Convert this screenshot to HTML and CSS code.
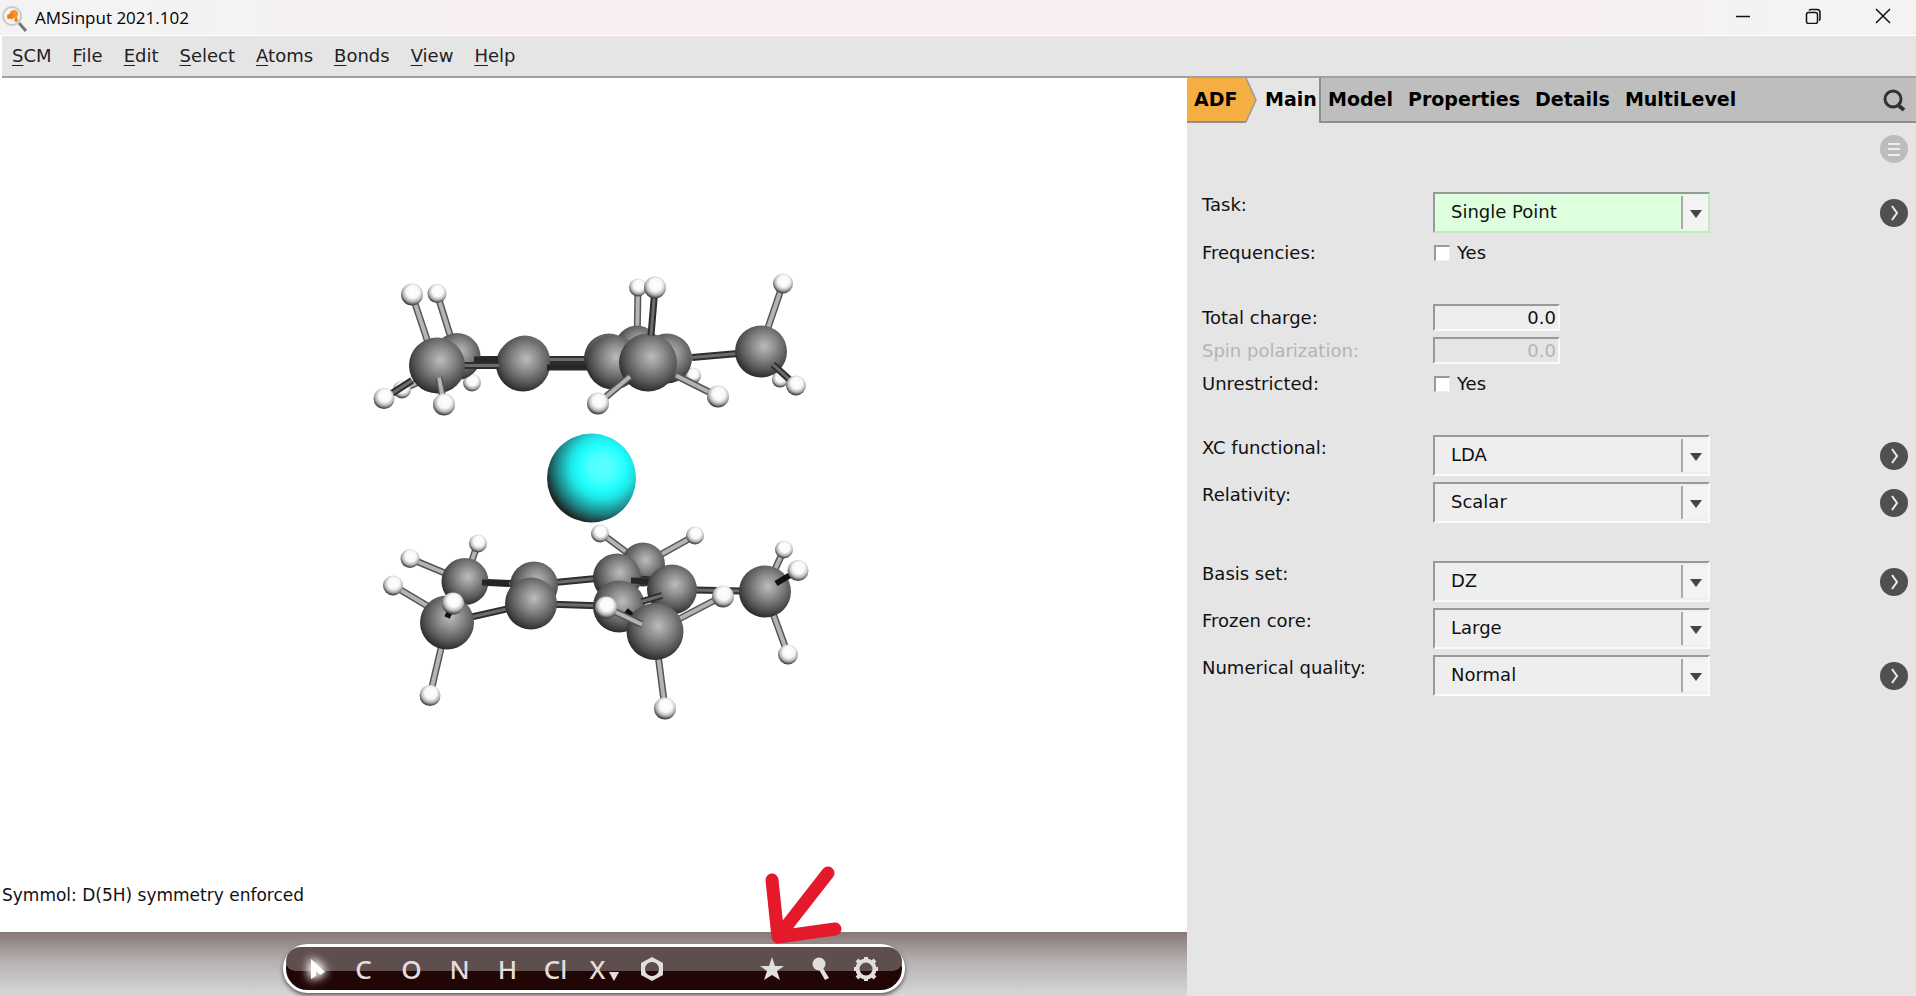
FILE: index.html
```html
<!DOCTYPE html>
<html lang="en">
<head>
<meta charset="utf-8">
<title>AMSinput 2021.102</title>
<link rel="stylesheet" href="styles.css">
</head>
<body>
<div class="window">
  <header class="titlebar">
    <svg class="app-icon" width="26" height="28" viewBox="0 0 26 28" aria-hidden="true">
      <path d="M17 19l7 8" stroke="#777" stroke-width="3"/>
      <circle cx="10" cy="12" r="9" fill="#f6f4f2" stroke="#c9c9c9" stroke-width="2"/>
      <path d="M9 15l4-4 2 6" stroke="#f07a14" stroke-width="2" fill="none"/>
      <circle cx="12" cy="10" r="4" fill="#ff9226"/><circle cx="7" cy="13" r="2" fill="#f47a18"/><circle cx="14" cy="16" r="2" fill="#f58a2a"/><path d="M6 13l5-3" stroke="#f47a18" stroke-width="4"/>
    </svg>
    <h1 class="title">AMSinput 2021.102</h1>
    <div class="controls">
      <button class="control" aria-label="Minimize"><svg width="16" height="16" viewBox="0 0 16 16"><path d="M1 8.500h14"/></svg></button>
      <button class="control restore" aria-label="Restore"><svg width="16" height="16" viewBox="0 0 16 16"><rect x="1.500" y="4.500" width="11" height="11" rx="2"/><path d="M4 2.500Q4.500 1.500 6 1.500h6q3 0 3 3v6q0 1.500-1 2"/></svg></button>
      <button class="control" aria-label="Close"><svg width="16" height="16" viewBox="0 0 16 16"><path d="M1 1l14 14M15 1L1 15"/></svg></button>
    </div>
  </header>
  <nav class="menubar">
    <a href="#"><u>S</u>CM</a><a href="#"><u>F</u>ile</a><a href="#"><u>E</u>dit</a><a href="#"><u>S</u>elect</a><a href="#"><u>A</u>toms</a><a href="#"><u>B</u>onds</a><a href="#"><u>V</u>iew</a><a href="#"><u>H</u>elp</a>
  </nav>
  <div class="workspace">
    <main class="viewer">
      <div class="scene">
        <svg class="molecule" viewBox="0 79 1187 853" role="img" aria-label="Molecule">
          <defs>
            <radialGradient id="carbon" cx=".56" cy=".4" r=".64"><stop offset="0" stop-color="#bcbcbc"/><stop offset=".35" stop-color="#8c8c8c"/><stop offset=".72" stop-color="#545454"/><stop offset="1" stop-color="#222"/></radialGradient>
            <radialGradient id="hydrogen" cx=".54" cy=".38" r=".64"><stop offset="0" stop-color="#fff"/><stop offset=".45" stop-color="#f8f8f8"/><stop offset=".7" stop-color="#b8b8b8"/><stop offset="1" stop-color="#222"/></radialGradient>
            <radialGradient id="metal" cx=".62" cy=".38" r=".72"><stop offset="0" stop-color="#5cffff"/><stop offset=".2" stop-color="#4cffff"/><stop offset=".36" stop-color="#20ffff"/><stop offset=".5" stop-color="#1fe2e2"/><stop offset=".72" stop-color="#1d8585"/><stop offset=".9" stop-color="#1c2626"/><stop offset="1" stop-color="#1a1a1a"/></radialGradient>
            <path id="b1" d="M437 294L453 345M472 383L460 365M402 390L437 374"/>
            <path id="b2" d="M457 360L612 360M524 367L648 367M692 358L761 352"/>
            <path id="b3" d="M638 288L637 347M693 377L667 362M783 284L764 340M780 380L765 355"/>
            <path id="b4" d="M412 295L432 355"/>
            <path id="b6" d="M600 533L643 565M695 536L643 565M478 543L465 582M410 559L465 582M393 586L447 618M784 550L765 592"/>
            <path id="b7" d="M465 582L534 585L617 577M531 604L619 607M447 623L531 604M672 590L765 592M617 577L672 583"/>
            <path id="b8" d="M430 696L447 623M665 709L655 632M722 597L655 632M788 655L765 592"/>
            <path id="b9" d="M444 405L439 378M598 404L630 377M718 397L676 376"/>
            <path id="b10" d="M655 288L651 336M384 399L412 381M796 386L773 365"/>
            <path id="b11" d="M606 608L642 625"/>
          </defs>
          <g class="light"><use href="#b1" class="edge"/><use href="#b1" class="core"/></g>
          <g class="dark"><use href="#b2" class="edge"/><use href="#b2" class="core"/></g>
          <g class="light"><use href="#b3" class="edge"/><use href="#b3" class="core"/></g>
          <g class="h"><circle cx="437" cy="294" r="9.500"/><circle cx="402" cy="390" r="9"/><circle cx="472" cy="383" r="9"/><circle cx="638" cy="288" r="9"/><circle cx="693" cy="376" r="8"/><circle cx="780" cy="380" r="8"/></g>
          <g class="c"><circle cx="457" cy="357" r="23.500"/><circle cx="525" cy="361" r="25"/><circle cx="523" cy="365" r="27"/><circle cx="637" cy="348" r="22"/><circle cx="609" cy="359" r="25"/><circle cx="613" cy="363" r="27"/><circle cx="667" cy="359" r="25"/><circle cx="761" cy="352" r="26"/></g>
          <path d="M474 360h24M547 368h40" class="shade"/>
          <g class="light"><use href="#b4" class="edge"/><use href="#b4" class="core"/></g>
          <g class="dark"><path d="M460 366H499" class="edge"/><path d="M460 366H499" class="core"/></g>
          <g class="c"><circle cx="437" cy="366" r="28"/><circle cx="648" cy="363" r="29"/></g>
          <g class="light"><use href="#b9" class="edge"/><use href="#b9" class="core"/></g>
          <g class="dark"><use href="#b10" class="edge"/><use href="#b10" class="core"/></g>
          <g class="h"><circle cx="412" cy="295" r="11"/><circle cx="384" cy="399" r="10.500"/><circle cx="444" cy="405" r="11"/><circle cx="655" cy="288" r="11"/><circle cx="598" cy="404" r="11"/><circle cx="718" cy="397" r="11"/><circle cx="783" cy="284" r="10"/><circle cx="796" cy="386" r="10"/></g>
          <circle cx="591.500" cy="478.500" r="44.500" class="metal"/>
          <g class="light"><use href="#b6" class="edge"/><use href="#b6" class="core"/></g>
          <g class="h"><circle cx="600" cy="534" r="9"/><circle cx="695" cy="536" r="9"/><circle cx="478" cy="544" r="9"/><circle cx="784" cy="550" r="9"/></g>
          <g class="c"><circle cx="643" cy="565" r="22"/></g>
          <g class="dark"><use href="#b7" class="edge"/><use href="#b7" class="core"/></g>
          <g class="light"><use href="#b8" class="edge"/><use href="#b8" class="core"/></g>
          <g class="c"><circle cx="465" cy="582" r="23.500"/><circle cx="534" cy="586" r="24"/><circle cx="617" cy="578" r="24"/></g>
          <path d="M482 583l27 1M631 581l18 1" class="shade"/>
          <g class="c"><circle cx="531" cy="604" r="26"/><circle cx="672" cy="590" r="25"/><circle cx="619" cy="607" r="26"/><circle cx="447" cy="623" r="27"/><circle cx="765" cy="592" r="26"/></g>
          <g class="dark"><path d="M642 602L662 596" class="edge"/><path d="M642 602L662 596" class="core"/></g>
          <path d="M447 618L453 606M776 584L798 571M626 611L636 620" class="deep"/>
          <g class="c"><circle cx="655" cy="632" r="28.500"/></g>
          <g class="light"><use href="#b11" class="edge"/><use href="#b11" class="core"/></g>
          <g class="h"><circle cx="410" cy="559" r="9.500"/><circle cx="393" cy="586" r="10"/><circle cx="453" cy="604" r="11"/><circle cx="430" cy="696" r="10.500"/><circle cx="606" cy="608" r="11"/><circle cx="723" cy="597" r="11"/><circle cx="665" cy="709" r="11"/><circle cx="798" cy="571" r="10.500"/><circle cx="788" cy="655" r="10"/></g>
        </svg>
        <p class="message">Symmol: D(5H) symmetry enforced</p>
      </div>
      <footer class="dock">
        <div class="tools">
          <button class="tool pointer" aria-label="Select"><svg width="24" height="24" viewBox="0 0 24 24"><path d="M7 2L21 15 16 18 12 13 12 19 7 22z"/></svg></button>
          <button class="tool">C</button>
          <button class="tool">O</button>
          <button class="tool">N</button>
          <button class="tool">H</button>
          <button class="tool">Cl</button>
          <button class="tool other">X<svg width="10" height="9" viewBox="0 0 10 9"><path d="M0 0h10L5 9z"/></svg></button>
          <button class="tool" aria-label="Rings"><svg width="24" height="24" viewBox="0 0 24 24"><path fill-rule="evenodd" d="M12 0L23 6V18L12 24 1 18V6zM12 5a7 7 0 1 0 .01 0z"/></svg></button>
          <button class="tool star" aria-label="Structures"><svg width="24" height="24" viewBox="0 0 24 24"><path d="M12 0L15 9H24L17 14 20 23 12 18 4 23 7 14 0 9H9z"/></svg></button>
          <button class="tool" aria-label="Symmetry"><svg width="24" height="24" viewBox="0 0 24 24"><circle cx="11" cy="7" r="6.500"/><path d="M9 9l4-1 8 13-4 2z"/></svg></button>
          <button class="tool gear" aria-label="Optimize"><svg width="24" height="24" viewBox="0 0 24 24"><circle cx="12" cy="12" r="8.500" fill="none" stroke="#e2dedd" stroke-width="4"/><path d="M12 0v5M12 19v5M0 12h5M19 12h5M3 3l4 4M17 17l4 4M3 21l4-4M17 7l4-4" stroke="#e2dedd" stroke-width="4"/></svg></button>
          <svg class="marker" width="80" height="80" viewBox="0 0 80 80" aria-hidden="true"><path d="M8 15L14 72L64 8M14 72L71 64"/></svg>
        </div>
      </footer>
    </main>
    <section class="panel">
      <nav class="tabs">
        <button class="tab adf">ADF</button>
        <svg class="chevron" width="12" height="45" viewBox="0 0 12 45" aria-hidden="true"><path d="M0 0L10 22 0 44z" fill="#f5ae41"/><path d="M0 0L10 22 0 44" fill="none" stroke="#999" stroke-width="1.500"/></svg>
        <button class="tab main">Main</button>
        <button class="tab model">Model</button>
        <button class="tab">Properties</button>
        <button class="tab">Details</button>
        <button class="tab">MultiLevel</button>
        <button class="search" aria-label="Search"><svg width="24" height="24" viewBox="0 0 24 24"><circle cx="11" cy="11" r="8"/><path d="M16 17l6 5" stroke-width="4"/></svg></button>
      </nav>
      <div class="options"><button class="round pale" aria-label="Panel menu"><svg width="28" height="28" viewBox="0 0 28 28"><path d="M8 9h12M8 14h12M8 20h12"/></svg></button></div>
      <form class="form">
        <div class="group">
          <div class="row tall"><label for="task">Task:</label><div class="pick green"><select id="task"><option>Single Point</option></select></div><button type="button" class="round" aria-label="Task details"><svg width="28" height="28" viewBox="0 0 28 28"><path d="M12 7l5 7-5 7"/></svg></button></div>
          <div class="row"><span>Frequencies:</span><label class="check"><input type="checkbox">Yes</label></div>
        </div>
        <div class="group">
          <div class="row"><label for="charge">Total charge:</label><input class="number" id="charge" type="text" value="0.0"></div>
          <div class="row off"><label for="spin">Spin polarization:</label><input class="number" id="spin" type="text" value="0.0" disabled></div>
          <div class="row"><span>Unrestricted:</span><label class="check"><input type="checkbox">Yes</label></div>
        </div>
        <div class="group">
          <div class="row tall"><label for="xc">XC functional:</label><div class="pick"><select id="xc"><option>LDA</option></select></div><button type="button" class="round" aria-label="XC details"><svg width="28" height="28" viewBox="0 0 28 28"><path d="M12 7l5 7-5 7"/></svg></button></div>
          <div class="row tall"><label for="rel">Relativity:</label><div class="pick"><select id="rel"><option>Scalar</option></select></div><button type="button" class="round" aria-label="Relativity details"><svg width="28" height="28" viewBox="0 0 28 28"><path d="M12 7l5 7-5 7"/></svg></button></div>
        </div>
        <div class="group">
          <div class="row tall"><label for="basis">Basis set:</label><div class="pick"><select id="basis"><option>DZ</option></select></div><button type="button" class="round" aria-label="Basis details"><svg width="28" height="28" viewBox="0 0 28 28"><path d="M12 7l5 7-5 7"/></svg></button></div>
          <div class="row tall"><label for="core">Frozen core:</label><div class="pick"><select id="core"><option>Large</option></select></div></div>
          <div class="row tall"><label for="quality">Numerical quality:</label><div class="pick"><select id="quality"><option>Normal</option></select></div><button type="button" class="round" aria-label="Quality details"><svg width="28" height="28" viewBox="0 0 28 28"><path d="M12 7l5 7-5 7"/></svg></button></div>
        </div>
      </form>
    </section>
  </div>
</div>
</body>
</html>
```
FILE: styles.css
```css
* { box-sizing: border-box; }
body { margin: 0; font-family: "DejaVu Sans", sans-serif; font-size: 18px; color: #111; background: #fff; }
button { border: 0; padding: 0; background: none; font: inherit; color: inherit; }
svg { display: block; }

.window { display: flex; flex-direction: column; min-height: 100vh; }

.titlebar { display: flex; align-items: center; height: 35px; padding-left: 2px; background: linear-gradient(90deg, #f3f3f3 8%, #faeff0 30%, #faeff0 80%, #f3f3f3 92%); }
.title { flex: 1; margin: 0 0 0 7px; font: 400 17px/24px "Open Sans", sans-serif; color: #000; }
.controls { display: flex; align-self: flex-start; }
.control { display: flex; align-items: center; justify-content: center; width: 66px; height: 32px; }
.restore { width: 74px; }
.control svg { fill: none; stroke: #111; stroke-width: 1.500; }

.menubar { display: flex; align-items: center; gap: 21px; height: 42px; margin: 1px 0 0 2px; padding-left: 10px; background: #e5e5e5; border-bottom: 2px solid #a0a0a0; }
.menubar a { color: #222; text-decoration: none; line-height: 24px; }
.menubar u { text-underline-offset: 3px; }

.workspace { flex: 1; display: grid; grid-template-columns: minmax(0, 1187fr) minmax(0, 729fr); }
.viewer { display: flex; flex-direction: column; background: #fff; }
.scene { flex: 1; position: relative; display: flex; }
.molecule { flex: 1; width: 100%; min-width: 0; }
.message { position: absolute; left: 2px; bottom: 25px; margin: 0; font-size: 17px; line-height: 24px; color: #111; }

.c circle { fill: url(#carbon); }
.h circle { fill: url(#hydrogen); }
.metal { fill: url(#metal); }
.edge { fill: none; stroke: #555; stroke-width: 7; }
.core { fill: none; stroke: #b4b4b4; stroke-width: 4; }
.dark .edge { stroke: #2e2e2e; stroke-width: 7; }
.dark .core { stroke: #6c6c6c; stroke-width: 3; }
.shade { fill: none; stroke: #262626; stroke-width: 6; }
.deep { fill: none; stroke: #111; stroke-width: 6; }

.dock { display: flex; justify-content: center; align-items: flex-start; height: 64px; padding-top: 12px; background: linear-gradient(#857877, #b5b1b0 45%, #d8d7d7); }
.tools { position: relative; display: flex; align-items: center; height: 49px; width: 622px; padding: 0 6px; border: 3px solid #fff; border-radius: 25px; background: #220505; box-shadow: 0 2px 4px #555; }
.tools::before { content: ""; position: absolute; inset: 0 0 45% 0; border-radius: 22px 22px 14px 14px; background: #5f4e4e; }
.tool { position: relative; display: flex; flex: 0 0 48px; align-items: center; justify-content: center; height: 42px; font-size: 26px; font-weight: 500; line-height: 32px; font-family: "Noto Sans", sans-serif; color: #e2dedd; }
.tool svg { fill: #e2dedd; }
.pointer svg { fill: #fff; filter: drop-shadow(0 0 5px #fff) drop-shadow(0 0 4px #fff); }
.other { align-items: flex-end; gap: 4px; padding-bottom: 5px; padding-left: 2px; }
.other svg { margin-bottom: 4px; }
.star { margin-left: 72px; }
.gear { flex-basis: 44px; }
.marker { position: absolute; left: 478px; bottom: 45px; }
.marker path { fill: none; stroke: #e4192c; stroke-width: 13; stroke-linecap: round; stroke-linejoin: round; }

.panel { background: #e5e5e5; }
.tabs { display: flex; height: 45px; background: #bebebe; border-bottom: 2px solid #8e8e8e; font-weight: 700; font-size: 19px; color: #000; }
.tab { margin-right: 15px; line-height: 24px; padding-bottom: 2px; }
.adf { width: 59px; margin: 0; padding-left: 7px; text-align: left; background: #f5ae41; }
.chevron { background: #e5e5e5; }
.main { height: 45px; width: 61px; margin: 0; padding: 0 0 4px 7px; text-align: left; background: #e5e5e5; }
.model { padding-left: 7px; border-left: 2px solid #8e8e8e; }
.search { margin-left: auto; padding-right: 10px; }
.search svg { fill: none; stroke: #333; stroke-width: 3; }

.options { display: flex; justify-content: flex-end; height: 69px; padding: 12px 8px 0 0; }
.round { display: block; height: 28px; width: 28px; border-radius: 50%; background: #505050; }
.round svg { fill: none; stroke: #eee; stroke-width: 2; }
.pale { background: #bcbcbc; }

.form { display: flex; flex-direction: column; gap: 38px; padding: 0 8px 0 15px; }
.group { display: grid; gap: 6px; }
.row { display: grid; grid-template-columns: 231px 277px 1fr; align-items: center; min-height: 27px; line-height: 26px; }
.tall > label { align-self: start; }
.row > .round { justify-self: end; }
.off { color: #b4b4b4; }
.pick { position: relative; height: 41px; border: 2px solid #fafafa; border-top-color: #999; border-left-color: #999; background: #eee; }
.pick::before { content: ""; position: absolute; right: 0; top: 2px; bottom: 2px; width: 25px; background: #f3f3f3; border-left: 2px solid #aaa; }
.pick::after { content: ""; position: absolute; right: 6px; top: 16px; border: 6px solid transparent; border-top: 8px solid #444; border-bottom: 0; }
.pick select { position: relative; z-index: 1; display: block; appearance: none; width: 100%; height: 35px; padding: 0 30px 0 16px; border: 0; background: none; font: inherit; color: #111; }
.green { background: #dfd; border-right-color: #beecbe; border-bottom-color: #beecbe; }
.check { display: flex; align-items: center; gap: 7px; }
.check input { appearance: none; margin: 0 0 0 1px; width: 16px; height: 16px; background: #fff; border: 1px solid #eee; border-top: 2px solid #999; border-left: 2px solid #999; }
.number { width: 127px; height: 27px; padding: 0 2px; border: 2px solid #fafafa; border-top-color: #999; border-left-color: #999; background: #eee; font: inherit; color: #111; text-align: right; }
.number:disabled { background: #e5e5e5; color: #b4b4b4; }
```
